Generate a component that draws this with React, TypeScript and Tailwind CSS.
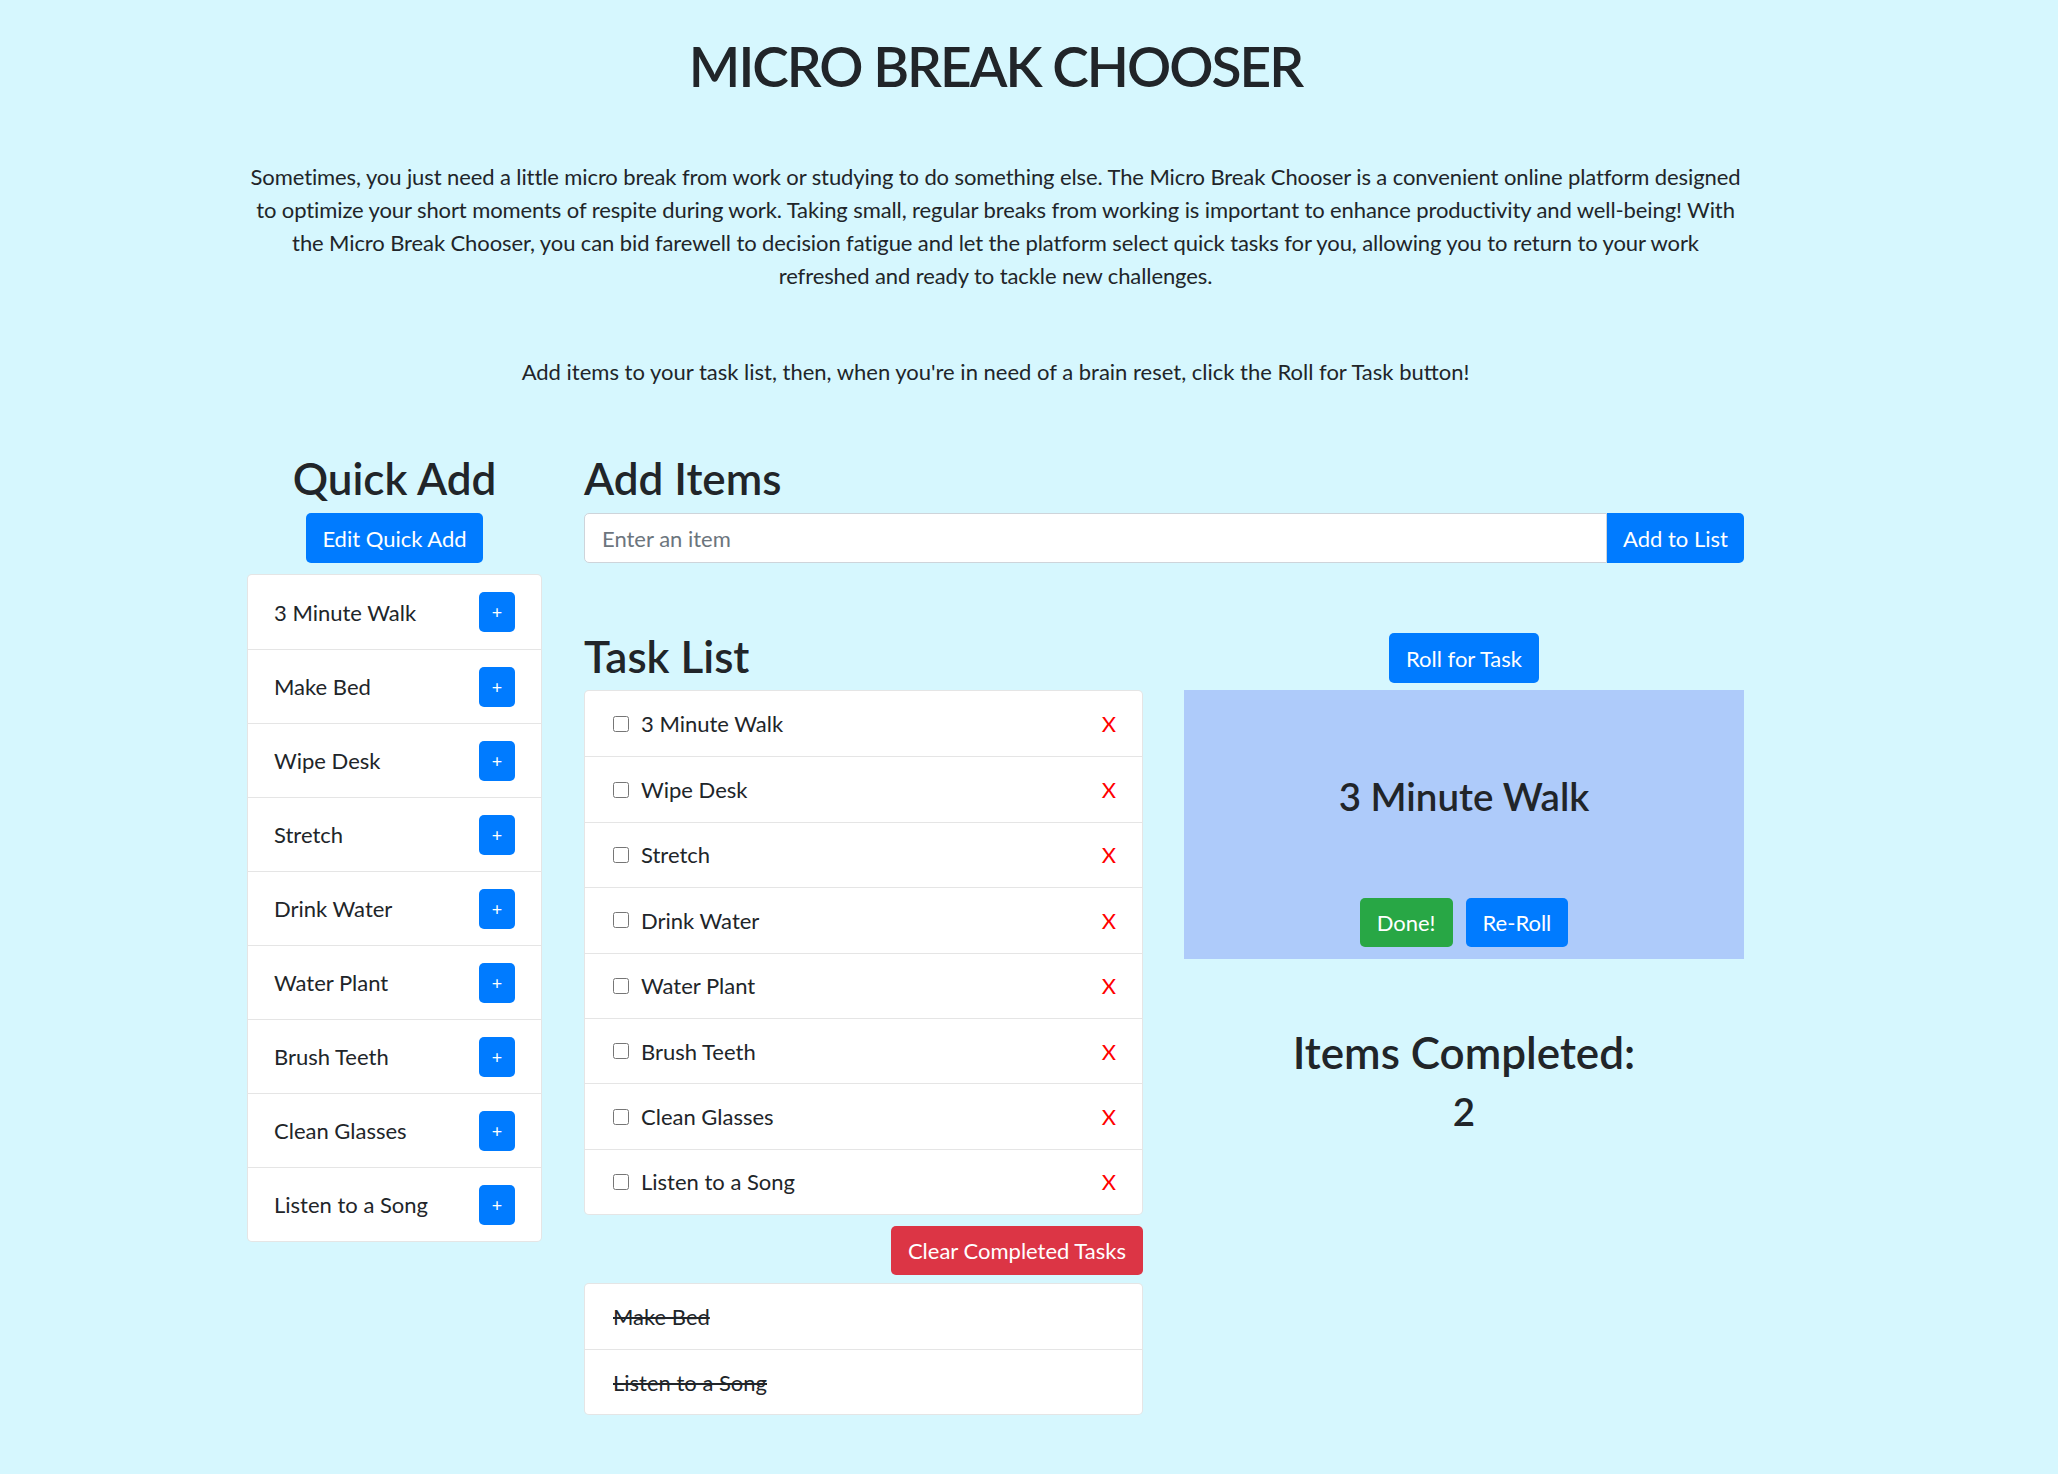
import { useState } from "react";

const quickItems = [
  "3 Minute Walk",
  "Make Bed",
  "Wipe Desk",
  "Stretch",
  "Drink Water",
  "Water Plant",
  "Brush Teeth",
  "Clean Glasses",
  "Listen to a Song",
];

const taskItems = [
  "3 Minute Walk",
  "Wipe Desk",
  "Stretch",
  "Drink Water",
  "Water Plant",
  "Brush Teeth",
  "Clean Glasses",
  "Listen to a Song",
];

const doneItems = ["Make Bed", "Listen to a Song"];

export default function App() {
  const [current] = useState("3 Minute Walk");

  return (
    <div className="min-h-screen w-full bg-[#d6f7fe] text-[#212529] font-['Lato',sans-serif]">
      <div className="ml-[247px] w-[1497px] pt-[33px] pb-[59px]">
        {/* Header */}
        <h1 className="text-center text-[55px] leading-[66px] font-semibold tracking-[-2px]">MICRO BREAK CHOOSER</h1>
        <p className="mt-[61px] text-center text-[22px] leading-[33px] tracking-[-0.1px] whitespace-nowrap">
          Sometimes, you just need a little micro break from work or studying to do something else. The Micro Break Chooser is a convenient online platform designed
          <br />
          to optimize your short moments of respite during work. Taking small, regular breaks from working is important to enhance productivity and well-being! With
          <br />
          the Micro Break Chooser, you can bid farewell to decision fatigue and let the platform select quick tasks for you, allowing you to return to your work
          <br />
          refreshed and ready to tackle new challenges.
        </p>
        <p className="mt-[63px] text-center text-[22px] leading-[33px]">
          Add items to your task list, then, when you're in need of a brain reset, click the Roll for Task button!
        </p>

        <div className="mt-[64px] flex items-start gap-[42px]">
          {/* Quick Add */}
          <div className="w-[295px] flex flex-col items-center">
            <h2 className="text-[44px] leading-[53px] font-semibold">Quick Add</h2>
            <button className="mt-[8px] h-[50px] px-[16px] rounded-[5px] bg-[#007bff] text-white text-[22px]">
              Edit Quick Add
            </button>
            <ul className="mt-[11px] w-full bg-white rounded-[5px] border border-black/10">
              {quickItems.map((item, i) => (
                <li
                  key={item}
                  className={`h-[74px] flex items-center justify-between pl-[26px] pr-[26px] text-[22px] ${i > 0 ? "border-t border-black/10" : ""}`}
                >
                  <span>{item}</span>
                  <button className="w-[36px] h-[40px] rounded-[5px] bg-[#007bff] text-white text-[18px] leading-none">+</button>
                </li>
              ))}
            </ul>
          </div>

          {/* Add items + tasks */}
          <div className="flex-1">
            <h2 className="text-[44px] leading-[53px] font-semibold">Add Items</h2>
            <div className="mt-[8px] flex h-[50px]">
              <input
                className="flex-1 h-full rounded-l-[5px] border border-[#ced4da] bg-white px-[17px] text-[22px] placeholder:text-[#6c757d] outline-none"
                placeholder="Enter an item"
              />
              <button className="h-full w-[137px] rounded-r-[5px] bg-[#007bff] text-white text-[22px]">Add to List</button>
            </div>

            <div className="mt-[67px] flex items-start gap-[41px]">
              {/* Task list */}
              <div className="w-[559px]">
                <h2 className="text-[44px] leading-[53px] font-semibold">Task List</h2>
                <ul className="mt-[7px] bg-white rounded-[5px] border border-black/10">
                  {taskItems.map((item, i) => (
                    <li
                      key={item + i}
                      className={`h-[65.4px] flex items-center justify-between pl-[28px] pr-[26px] text-[22px] ${i > 0 ? "border-t border-black/10" : ""}`}
                    >
                      <label className="flex items-center gap-[12px]">
                        <input type="checkbox" className="w-[16px] h-[16px] m-0" />
                        <span>{item}</span>
                      </label>
                      <span className="text-[#ff0000]">X</span>
                    </li>
                  ))}
                </ul>
                <div className="mt-[11px] flex justify-end">
                  <button className="h-[49px] px-[17px] rounded-[5px] bg-[#dc3545] text-white text-[22px]">
                    Clear Completed Tasks
                  </button>
                </div>
                <ul className="mt-[8px] bg-white rounded-[5px] border border-black/10">
                  {doneItems.map((item, i) => (
                    <li
                      key={item}
                      className={`h-[65px] flex items-center pl-[28px] text-[22px] line-through ${i > 0 ? "border-t border-black/10" : ""}`}
                    >
                      {item}
                    </li>
                  ))}
                </ul>
              </div>

              {/* Roll */}
              <div className="flex-1 pt-[3px] flex flex-col items-center">
                <button className="h-[50px] px-[17px] rounded-[5px] bg-[#007bff] text-white text-[22px]">Roll for Task</button>
                <div className="mt-[7px] w-full h-[269px] bg-[#aecbfa] flex flex-col items-center pt-[83px]">
                  <h3 className="text-[38.5px] leading-[46px] font-semibold">{current}</h3>
                  <div className="mt-[79px] flex gap-[13px]">
                    <button className="h-[49px] px-[17px] rounded-[5px] bg-[#28a745] text-white text-[22px]">Done!</button>
                    <button className="h-[49px] px-[17px] rounded-[5px] bg-[#007bff] text-white text-[22px]">Re-Roll</button>
                  </div>
                </div>
                <h2 className="mt-[67px] text-[44px] leading-[53px] font-semibold">Items Completed:</h2>
                <h3 className="mt-[9px] text-[38.5px] leading-[46px] font-semibold">2</h3>
              </div>
            </div>
          </div>
        </div>
      </div>
    </div>
  );
}
